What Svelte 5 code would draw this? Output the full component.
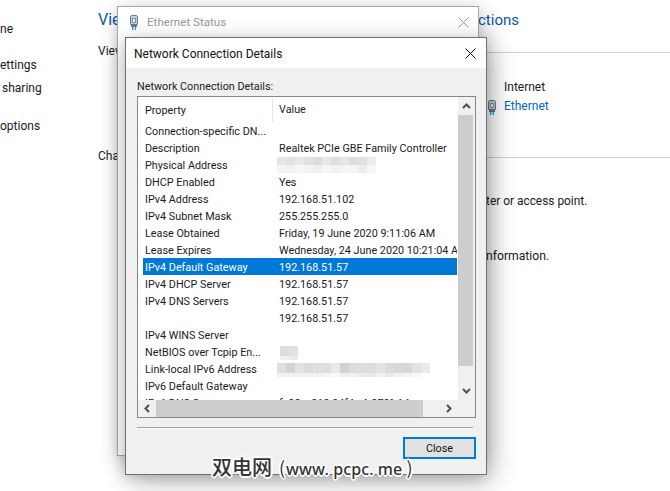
<script>
  const rows = [
    ['Connection-specific DN...', ''],
    ['Description', 'Realtek PCIe GBE Family Controller'],
    ['Physical Address', '', 'a'],
    ['DHCP Enabled', 'Yes'],
    ['IPv4 Address', '192.168.51.102'],
    ['IPv4 Subnet Mask', '255.255.255.0'],
    ['Lease Obtained', 'Friday, 19 June 2020 9:11:06 AM'],
    ['Lease Expires', 'Wednesday, 24 June 2020 10:21:04 AM'],
    ['IPv4 Default Gateway', '192.168.51.57'],
    ['IPv4 DHCP Server', '192.168.51.57'],
    ['IPv4 DNS Servers', '192.168.51.57'],
    ['', '192.168.51.57'],
    ['IPv4 WINS Server', ''],
    ['NetBIOS over Tcpip En...', '', 'b'],
    ['Link-local IPv6 Address', '', 'c'],
    ['IPv6 Default Gateway', ''],
    ['IPv6 DNS Server', 'fe80::c819:94f4:a1:870%14']
  ];
  const blur = {
    a: [['#e6e6e6','#e2e2e2','#e9e9e9','#e4e2e0','#dcdcdc','#e8e8e8','#e0e0e0','#e6e6e6','#dedede','#e2e2dc','#ececec'],
        ['#f4f4f4','#f2f2f2','#f6f6f6','#f4f4f2','#f0f0f0','#f6f6f6','#f2f2f2','#f5f5f5','#f4f4f4','#ececf0','#f6f6f6']],
    b: [['#dedcdc','#e2e2e2'],['#f0f0f0','#ececee']],
    c: [['#dde0e2','#d6d2d2','#dfe2e8','#dcdada','#e2dedc','#dcdfe8','#e8eae4','#cfd2d4','#dcdce0','#e0dcdc','#dedcdc','#e2e4e4','#dcdadc','#d8d8d8','#d8d8d8','#dfe4e0','#e8ece8'],
        ['#f0f0f0','#f2f2f4','#f2f0ee','#f0f0f0','#f2f0ee','#f4f4f4','#f8f8f6','#eeeeee','#eeeef0','#ecebec','#e9e9e9','#f2f2f2','#e8e8e8','#f2f2f4','#f5f5f7','#f8f8f8','#fbfbfb']]
  };
</script>

{#snippet netIcon()}
  <svg class="net" viewBox="0 0 10 16" width="10" height="16" aria-hidden="true">
    <path d="M2.5 1.5h5l1 1v8h-7v-8z" fill="#c3d0da" stroke="#647a8e" stroke-width="1"/>
    <path d="M3.5 4.5h3v4h-3z" fill="#f0f4f7" stroke="#7a8ea0" stroke-width="1"/>
    <path d="M2 11h6v2H2z" fill="#60788c"/>
    <path d="M3 13h1.3v3H3zM5.7 13H7v3H5.7z" fill="#1f9fd8"/>
  </svg>
{/snippet}

{#snippet closeX(cls)}
  <svg class={cls} viewBox="0 0 11 11" width="11" height="11" aria-hidden="true">
    <path d="M.5.5l10 10M10.5.5l-10 10" stroke="currentColor" stroke-width="1" fill="none"/>
  </svg>
{/snippet}

<div class="desktop">
  <aside class="side">
    <span class="s1">ne</span>
    <span class="s2">ettings</span>
    <span class="s3">sharing</span>
    <span class="s4">options</span>
  </aside>

  <div class="stub">
    <span class="h">Vie</span>
    <span class="v">View</span>
    <span class="c">Cha</span>
  </div>

  <section class="right">
    <span class="h r1">ctions</span>
    <hr />
    <div class="conn">
      <span class="inet">Internet</span>
      <div class="eth">{@render netIcon()}<span>Ethernet</span></div>
    </div>
    <hr class="hr2" />
    <span class="t1">ter or access point.</span>
    <span class="t2">nformation.</span>
  </section>

  <div class="win back">
    <div class="backtitle">
      {@render netIcon()}
      <span>Ethernet Status</span>
      {@render closeX('x grey')}
    </div>
  </div>

  <div class="win front">
    <div class="title">
      <span>Network Connection Details</span>
      {@render closeX('x')}
    </div>
    <div class="body">
      <div class="label">Network Connection Details:</div>
      <div class="list">
        <div class="view">
          <div class="head"><span class="p">Property</span><span class="val">Value</span></div>
          <div class="rows">
            {#each rows as r, i}
              <div class="row" class:sel={i === 8}>
                <span class="k">{r[0]}</span>
                {#if r[2]}
                  <span class="blur {r[2]}">
                    {#each blur[r[2]] as line}
                      <span class="bl">
                        {#each line as col}<i style="background:{col}"></i>{/each}
                      </span>
                    {/each}
                  </span>
                {:else}
                  <span class="w">{r[1]}</span>
                {/if}
              </div>
            {/each}
          </div>
        </div>
        <div class="vbar">
          <div class="btn"><svg viewBox="0 0 9 6" width="9" height="6"><path d="M1 5l3.5-3.5L8 5" fill="none" stroke="#505050" stroke-width="2"/></svg></div>
          <div class="thumb"></div>
          <div class="fill"></div>
          <div class="btn"><svg viewBox="0 0 9 6" width="9" height="6"><path d="M1 1l3.5 3.5L8 1" fill="none" stroke="#505050" stroke-width="2"/></svg></div>
        </div>
        <div class="hbar">
          <div class="hbtn"><svg viewBox="0 0 6 9" width="6" height="9"><path d="M5 1L1.5 4.5 5 8" fill="none" stroke="#505050" stroke-width="2"/></svg></div>
          <div class="hthumb"></div>
          <div class="fill"></div>
          <div class="hbtn"><svg viewBox="0 0 6 9" width="6" height="9"><path d="M1 1l3.5 3.5L1 8" fill="none" stroke="#505050" stroke-width="2"/></svg></div>
        </div>
        <div class="corner"></div>
      </div>
      <div class="sep"></div>
      <div class="foot"><button>Close</button></div>
    </div>
  </div>

  <div class="mark"><span>双电网</span><span class="par o">(</span><span class="lat">www. pcpc. me</span><span class="par c2">)</span></div>
</div>

<style>
  :global(body) { margin: 0; background: #fff; }
  .desktop {
    position: relative;
    width: 670px;
    height: 491px;
    overflow: hidden;
    background: #fff;
    font: 12px/17px Roboto, "Liberation Sans", sans-serif;
    color: #1a1a1a;
  }
  .side { position: absolute; left: 0; top: 0; display: flex; flex-direction: column; }
  .side span { position: absolute; white-space: nowrap; }
  .s1 { left: 0; top: 21px; }
  .s2 { left: 0; top: 57px; }
  .s3 { left: 2px; top: 80px; }
  .s4 { left: 0; top: 118px; }
  .stub span { position: absolute; left: 98px; white-space: nowrap; }
  .h { font-size: 14.5px; line-height: 22px; color: #0a5aa8; }
  .stub .h { top: 9px; font-size: 16px; }
  .v { top: 43px; }
  .c { top: 148px; }
  .right { position: absolute; left: 486px; top: 0; right: 0; bottom: 0; }
  .right hr { border: 0; height: 1px; background: #cfcfcf; margin: 0; position: absolute; left: 0; right: 0; top: 52px; }
  .right .hr2 { top: 157px; }
  .r1 { position: absolute; left: -8px; top: 9px; font-size: 15px; }
  .conn { position: absolute; left: 1px; top: 78px; }
  .inet { position: absolute; left: 17px; top: 1px; }
  .eth { position: absolute; top: 20px; left: 0; display: flex; gap: 7px; color: #0a66c2; white-space: nowrap; align-items: center; }
  .t1 { position: absolute; left: 0; top: 193px; white-space: nowrap; font-size: 11.9px; }
  .t2 { position: absolute; left: 0; top: 248px; white-space: nowrap; font-size: 12.2px; }

  .win { position: absolute; box-sizing: border-box; background: #fff; }
  .back {
    left: 117px; top: 6px; width: 362px; height: 450px;
    border: 1px solid #a8a8a8;
    box-shadow: 4px 6px 22px rgba(0,0,0,.22), -2px 2px 10px rgba(0,0,0,.08);
  }
  .backtitle { display: flex; align-items: center; height: 30px; padding-left: 11px; color: #9a9a9a; font-size: 11.6px; }
  .backtitle span { margin-left: 8px; }
  .x { margin-left: auto; margin-right: 10px; color: #111; flex: none; }
  .grey { color: #9a9a9a; margin-right: 9px; }
  .front {
    left: 125px; top: 37px; width: 362px; height: 438px;
    border: 1px solid #6f6f6f;
    display: flex; flex-direction: column;
    box-shadow: 5px 7px 24px rgba(0,0,0,.28), -3px 3px 12px rgba(0,0,0,.12);
  }
  .title { display: flex; align-items: center; height: 30px; padding-left: 8px; flex: none; color: #111; }
  .title span { line-height: 18px; height: 17px; }
  .body { flex: 1; background: #f0f0f0; padding: 9px 10px 0 11px; display: flex; flex-direction: column; font-size: 10.8px; }
  .label { height: 19px; line-height: 19px; }
  .list {
    box-sizing: border-box; width: 339px; height: 322px;
    border: 1px solid #828790; background: #fff;
    display: grid; grid-template-columns: 320px 17px; grid-template-rows: 303px 17px;
  }
  .view { overflow: hidden; padding-left: 5px; }
  .head { display: flex; height: 25px; align-items: center; }
  .p { width: 130px; padding-left: 2px; box-sizing: border-box; height: 24px; line-height: 25px; border-right: 1px solid #e5e5e5; }
  .val { padding-left: 6px; line-height: 25px; }
  .rows { overflow: hidden; }
  .row { display: flex; height: 17px; line-height: 19px; white-space: nowrap; overflow: hidden; margin-right: 1px; }
  .k { width: 134px; padding-left: 2px; box-sizing: border-box; flex: none; }
  .w { padding-left: 2px; flex: none; }
  .sel { background: #0078d7; color: #fff; }
  .blur { display: flex; flex-direction: column; padding-top: 1px; }
  .blur.b { padding: 3px 0 0 3px; }
  .blur.c { padding-top: 3px; }
  .blur.b .bl:first-child, .blur.c .bl:first-child { height: 10px; }
  .blur.b .bl:last-child, .blur.c .bl:last-child { height: 4px; }
  .bl { display: flex; height: 9px; }
  .bl i { width: 9px; display: block; }
  .vbar { display: flex; flex-direction: column; background: #f0f0f0; }
  .btn { height: 18px; display: flex; align-items: center; justify-content: center; flex: none; }
  .thumb { height: 251px; width: 15px; background: #cdcdcd; }
  .fill { flex: 1; }
  .hbar { display: flex; background: #f0f0f0; }
  .hbtn { width: 18px; display: flex; align-items: center; justify-content: center; flex: none; }
  .hthumb { width: 267px; background: #cdcdcd; }
  .corner { background: #f0f0f0; }
  .sep { height: 1px; margin-top: 9px; width: 336px; background: #a0a0a0; box-shadow: 0 1px 0 #fff; }
  .foot { display: flex; justify-content: flex-end; margin-top: 9px; }
  button {
    box-sizing: border-box; width: 73px; height: 22px; padding: 0; margin-right: 0;
    background: #e1e1e1; border: 2px solid #0078d7; font: inherit; color: #111;
  }
  .mark {
    position: absolute; left: 212px; top: 453px; white-space: nowrap;
    font: 500 20px/28px "Noto Sans CJK SC", "Noto Sans", sans-serif;
    color: #333;
    text-shadow: -2px 0 0 #fff, 2px 0 0 #fff, 0 -2px 0 #fff, 0 2px 0 #fff, -1px -1px 0 #fff, 1px 1px 0 #fff, 1px -1px 0 #fff, -1px 1px 0 #fff;
  }
  .lat { font-size: 16px; font-family: "Noto Sans", sans-serif; margin-left: 1px; letter-spacing: .1px; }
  .par { font-weight: 400; font-size: 18px; }
  .o { margin-left: 7px; }
  .c2 { margin-left: 4px; }
</style>
